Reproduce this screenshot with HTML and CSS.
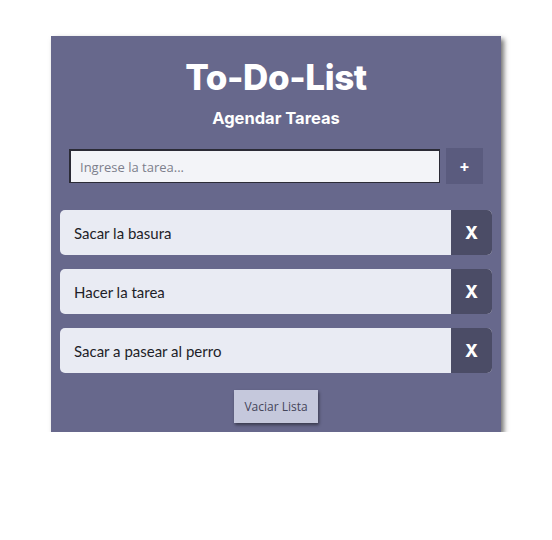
FILE: index.html
```html
<!DOCTYPE html>
<html lang="es">
<head>
<meta charset="utf-8">
<title>To-Do-List</title>
<link rel="stylesheet" href="styles.css">
</head>
<body>
<main class="card">
  <h1 class="title">To-Do-List</h1>
  <h2 class="subtitle">Agendar Tareas</h2>
  <form class="add-row">
    <input class="task-input" type="text" placeholder="Ingrese la tarea...">
    <button class="add-btn" type="button">+</button>
  </form>
  <ul class="list">
    <li class="item"><span class="item-text">Sacar la basura</span><button class="del-btn" type="button">X</button></li>
    <li class="item"><span class="item-text">Hacer la tarea</span><button class="del-btn" type="button">X</button></li>
    <li class="item"><span class="item-text">Sacar a pasear al perro</span><button class="del-btn" type="button">X</button></li>
  </ul>
  <div class="footer">
    <button class="clear-btn" type="button">Vaciar Lista</button>
  </div>
</main>
</body>
</html>
```
FILE: styles.css
```css
* { box-sizing: border-box; }
html, body { margin: 0; padding: 0; background: #ffffff; }
body { padding-top: 36px; font-family: "Lato", "Noto Sans", sans-serif; }
.card {
  width: 450px;
  height: 396px;
  margin: 0 auto;
  background: #67688c;
  box-shadow: 3px 3px 5px rgba(0,0,0,0.55);
  padding: 0 9px;
  display: flex;
  flex-direction: column;
}
.title {
  margin: 19px 0 0;
  text-align: center;
  color: #ffffff;
  font-family: "Inter", sans-serif;
  font-weight: 800;
  font-size: 35px;
  line-height: 44px;
  letter-spacing: -0.4px;
}
.subtitle {
  margin: 9px 0 0;
  text-align: center;
  color: #ffffff;
  font-family: "Inter", sans-serif;
  font-weight: 700;
  font-size: 16.5px;
  line-height: 20px;
}
.add-row {
  margin: 20px 9px 0;
  display: flex;
  gap: 6px;
  align-items: center;
}
.task-input {
  flex: 1;
  height: 34px;
  border: 1px solid #2b2b36;
  border-left-width: 2px;
  border-top-width: 2px;
  background: #f3f4f8;
  padding: 0 9px;
  font-family: "Open Sans", sans-serif;
  font-size: 13px;
  color: #333;
  outline: none;
}
.task-input::placeholder { color: #7d7f8c; }
.add-btn {
  width: 37px;
  height: 36px;
  border: none;
  background: #5a5b7e;
  color: #ffffff;
  font-family: "Inter", sans-serif;
  font-weight: 700;
  font-size: 16px;
  padding: 0;
}
.list {
  list-style: none;
  margin: 26px 0 0;
  padding: 0;
  display: flex;
  flex-direction: column;
  gap: 14px;
}
.item {
  height: 45px;
  display: flex;
  align-items: stretch;
  background: #e9ebf3;
  border-radius: 5px;
  overflow: hidden;
}
.item-text {
  flex: 1;
  display: flex;
  align-items: center;
  padding-left: 14px;
  font-family: "Lato", sans-serif;
  font-size: 15px;
  color: #1e1e28;
}
.del-btn {
  width: 41px;
  border: none;
  background: #4b4c66;
  color: #ffffff;
  font-family: "Inter", sans-serif;
  font-weight: 800;
  font-size: 17px;
  padding: 0;
}
.footer {
  display: flex;
  justify-content: center;
  margin-top: 17px;
}
.clear-btn {
  width: 84px;
  height: 33px;
  border: none;
  background: #c5c8dc;
  color: #44455a;
  font-family: "Open Sans", sans-serif;
  font-size: 12px;
  padding: 0;
  box-shadow: 1px 2px 3px rgba(0,0,0,0.45);
}
```
